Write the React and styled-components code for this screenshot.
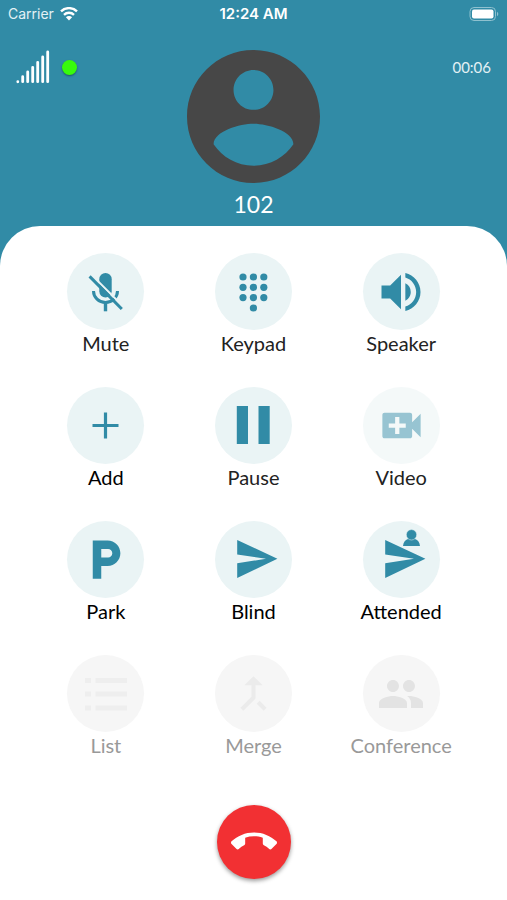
import React from 'react';
import styled, { createGlobalStyle, css } from 'styled-components';
import {
  MdCallEnd,
  MdCallMerge,
  MdLocalParking,
  MdPeople,
  MdVideoCall,
  MdVolumeUp,
} from 'react-icons/md';

const TEAL = '#318ba6';
const CIRCLE = '#eaf4f5';

const GlobalStyle = createGlobalStyle`
  * {
    box-sizing: border-box;
  }

  body {
    margin: 0;
    font-family: Lato, 'Open Sans', sans-serif;
    background-color: #FFFFFF;
  }
`;

const Screen = styled.div`
  display: flex;
  flex-direction: column;
  min-height: 100vh;

  background-color: ${TEAL};
`;

const StatusBar = styled.div`
  display: grid;
  grid-template-columns: 1fr auto 1fr;
  align-items: center;
  height: 28px;
  padding: 0 8px;

  font-family: Inter, sans-serif;
  font-size: 14px;
  line-height: 20px;
  color: #FFFFFF;
`;

const Carrier = styled.div`
  display: flex;
  align-items: center;
  gap: 6px;

  color: #e3f1f5;
`;

const Clock = styled.time`
  font-weight: 600;
  font-size: 15px;
`;

const BatteryIcon = styled.svg`
  display: block;
  justify-self: end;
`;

const CallHeader = styled.header`
  display: grid;
  grid-template-columns: 1fr auto 1fr;
  align-items: start;
  padding: 22px 16px 8px;
`;

const Quality = styled.div`
  display: flex;
  align-items: center;
  gap: 12px;
  height: 34px;
`;

const OnlineDot = styled.span`
  width: 15px;
  height: 15px;
  border-radius: 50%;

  background-color: #38fb0c;
  box-shadow: 0 1px 2px rgba(0, 0, 0, 0.4);
`;

const Caller = styled.div`
  display: flex;
  flex-direction: column;
  align-items: center;
  gap: 7px;
`;

const Avatar = styled.svg`
  display: block;
  width: 133px;
  height: 133px;

  fill: #474747;
`;

const CallerName = styled.h1`
  margin: 0;

  font-weight: 400;
  font-size: 23px;
  line-height: 28px;
  color: #FFFFFF;
`;

const Timer = styled.time`
  justify-self: end;

  font-size: 15px;
  line-height: 34px;
  color: #e3f1f5;
`;

const Sheet = styled.main`
  display: flex;
  flex: 1;
  flex-direction: column;
  align-items: center;
  gap: 47px;
  padding: 27px 32px 20px;
  border-radius: 40px 40px 0 0;

  background-color: #FFFFFF;
`;

const Actions = styled.div`
  display: grid;
  grid-template-columns: repeat(3, 1fr);
  gap: 31px 0;
  width: 100%;
`;

const IconCircle = styled.span`
  display: flex;
  align-items: center;
  justify-content: center;
  width: 77px;
  height: 77px;
  border-radius: 50%;

  color: ${TEAL};
  background-color: ${CIRCLE};
`;

const Label = styled.span`
  font-size: 20px;
  line-height: 26px;
  color: ${({ $strong }) => ($strong ? '#000000' : '#222222')};
`;

const Action = styled.button`
  display: flex;
  flex-direction: column;
  align-items: center;
  justify-self: center;
  padding: 0;
  border: 0;

  font: inherit;
  background: none;
  cursor: pointer;

  ${({ $faded }) => $faded && css`
    ${IconCircle} {
      opacity: 0.5;
    }
  `}

  &:disabled {
    cursor: default;

    ${IconCircle} {
      color: #e3e3e3;
      background-color: #f6f6f6;
    }

    ${Label} {
      color: #999999;
    }
  }
`;

const HangUp = styled.button`
  display: flex;
  align-items: center;
  justify-content: center;
  width: 74px;
  height: 74px;
  padding: 0;
  border: 0;
  border-radius: 50%;

  color: #FFFFFF;
  background-color: #f23033;
  box-shadow: 0 2px 4px rgba(0, 0, 0, 0.4);
  cursor: pointer;
`;

const Glyph = ({ children }) => (
  <svg width="77" height="77" viewBox="0 0 77 77" fill="currentColor" aria-hidden="true">
    {children}
  </svg>
);

const MuteIcon = () => (
  <Glyph>
    <rect x="32.3" y="20" width="12.4" height="24.5" rx="6.2" />
    <path d="M26.5 38a12 11.5 0 0 0 24 0" fill="none" stroke="currentColor" strokeWidth="3" />
    <rect x="36.8" y="49" width="3.4" height="9.3" />
    <path d="M25 22.2l33 33" stroke={CIRCLE} strokeWidth="2" />
    <path d="M22.6 23.4l32.2 32.6" stroke="currentColor" strokeWidth="3" />
  </Glyph>
);

const KEYS = [
  [28, 24], [38.4, 24], [48.8, 24],
  [28, 34.3], [38.4, 34.3], [48.8, 34.3],
  [28, 44.6], [38.4, 44.6], [48.8, 44.6],
  [38.4, 55],
];

const KeypadIcon = () => (
  <Glyph>
    {KEYS.map(([x, y]) => <circle key={`${x}-${y}`} cx={x} cy={y} r="3.6" />)}
  </Glyph>
);

const AddIcon = () => (
  <Glyph>
    <path d="M25.5 38.5h26M38.5 25.5v26" stroke="currentColor" strokeWidth="3.2" />
  </Glyph>
);

const PauseIcon = () => (
  <Glyph>
    <path d="M21.8 19h11.2v38H21.8zM43.5 19h11.2v38H43.5z" />
  </Glyph>
);

const ARROW = 'M22.2 19L62.4 37.8 22.2 57V42.2L51 37.8 22.2 33.6z';

const BlindIcon = () => (
  <Glyph>
    <path d={ARROW} />
  </Glyph>
);

const AttendedIcon = () => (
  <Glyph>
    <path d={ARROW} />
    <path d="M40 25c.4-3.6 2-6.2 5-7h7c3 .8 4.600 3.400 5 7z" />
    <circle cx="48.500" cy="13.800" r="5.200" stroke={CIRCLE} strokeWidth="0.500" />
  </Glyph>
);

const ListIcon = () => (
  <Glyph>
    <g fill="#eeeeee">
      <path d="M18 23h6v5h-6zM18 36.500h6v5h-6zM18 50.500h6v5h-6z" />
      <path d="M28.500 23h31.500v5H28.500zM28.500 36.500h31.500v5H28.500zM28.500 50.500h31.500v5H28.500z" />
    </g>
  </Glyph>
);

const WifiIcon = () => (
  <svg width="18" height="14" viewBox="0 0 18 14" aria-hidden="true">
    <g fill="none" stroke="#FFFFFF" strokeWidth="2.400">
      <path d="M1 4.400a11.400 11.400 0 0 1 16 0" />
      <path d="M4 7.800a7.200 7.200 0 0 1 10 0" />
    </g>
    <path d="M9 13.400L5.900 10.300a4.400 4.400 0 0 1 6.200 0z" fill="#FFFFFF" />
  </svg>
);

const SignalIcon = () => (
  <svg width="34" height="34" viewBox="0 0 34 34" aria-hidden="true">
    <g stroke="#FFFFFF" strokeWidth="2.800" strokeLinecap="round">
      <path d="M1.800 31.700v.1M6.700 31.700v-5M11.700 31.700v-9.700M16.700 31.700v-14.400M21.700 31.700v-19.400M26.700 31.700v-24.700M31.700 31.700V2" />
    </g>
  </svg>
);

const ACTIONS = [
  { label: 'Mute', icon: <MuteIcon /> },
  { label: 'Keypad', icon: <KeypadIcon /> },
  { label: 'Speaker', icon: <MdVolumeUp size={52} /> },
  { label: 'Add', icon: <AddIcon />, strong: true },
  { label: 'Pause', icon: <PauseIcon /> },
  { label: 'Video', icon: <MdVideoCall size={51} />, faded: true },
  { label: 'Park', icon: <MdLocalParking size={51} />, strong: true },
  { label: 'Blind', icon: <BlindIcon />, strong: true },
  { label: 'Attended', icon: <AttendedIcon />, strong: true },
  { label: 'List', icon: <ListIcon />, disabled: true },
  { label: 'Merge', icon: <MdCallMerge size={49} color="#ebebeb" />, disabled: true },
  { label: 'Conference', icon: <MdPeople size={48} />, disabled: true },
];

const App = () => (
  <Screen>
    <GlobalStyle />
    <StatusBar>
      <Carrier>
        Carrier
        <WifiIcon />
      </Carrier>
      <Clock>12:24 AM</Clock>
      <BatteryIcon width="30" height="14" viewBox="0 0 30 14" aria-hidden="true">
        <rect x="1" y="0.500" width="25.500" height="13" rx="4" fill="none" stroke="#8fc1cf" />
        <rect x="3" y="2.500" width="21.500" height="9" rx="2" fill="#FFFFFF" />
        <path d="M28 4.800a2.500 2.500 0 0 1 0 4.400z" fill="#8fc1cf" />
      </BatteryIcon>
    </StatusBar>
    <CallHeader>
      <Quality>
        <SignalIcon />
        <OnlineDot />
      </Quality>
      <Caller>
        <Avatar viewBox="2 2 20 20" aria-hidden="true">
          <path d="M12 2C6.480 2 2 6.480 2 12s4.480 10 10 10 10-4.480 10-10S17.520 2 12 2zm0 3c1.660 0 3 1.340 3 3s-1.340 3-3 3-3-1.340-3-3 1.340-3 3-3zm0 14.400c-2.500 0-4.710-1.280-6-3.220.03-1.990 4-3.080 6-3.080 1.990 0 5.970 1.090 6 3.080-1.290 1.940-3.500 3.220-6 3.220z" />
        </Avatar>
        <CallerName>102</CallerName>
      </Caller>
      <Timer>00:06</Timer>
    </CallHeader>
    <Sheet>
      <Actions>
        {ACTIONS.map(({ label, icon, strong, faded, disabled }) => (
          <Action key={label} type="button" $faded={faded} disabled={disabled}>
            <IconCircle>{icon}</IconCircle>
            <Label $strong={strong}>{label}</Label>
          </Action>
        ))}
      </Actions>
      <HangUp type="button" aria-label="End call">
        <MdCallEnd size={46} />
      </HangUp>
    </Sheet>
  </Screen>
);

export default App;
